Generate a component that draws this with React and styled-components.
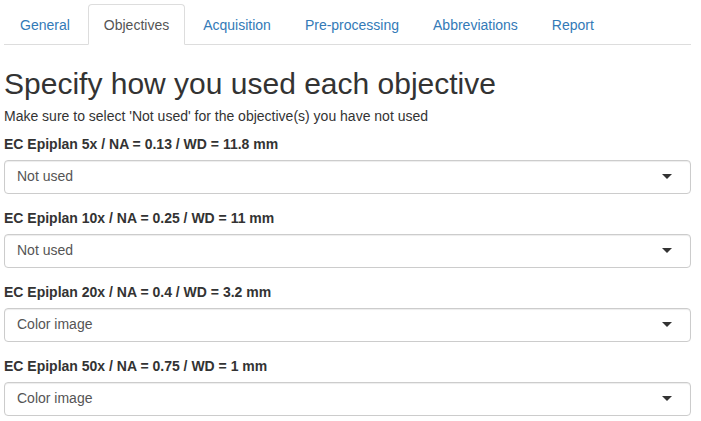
import React from "react";
import styled, { createGlobalStyle } from "styled-components";

const GlobalStyle = createGlobalStyle`
  body {
    margin: 0;
    background: #fff;
    font-family: "Liberation Sans", Arial, sans-serif;
    font-size: 14px;
    line-height: 1.42857;
    color: #333;
  }
  * { box-sizing: border-box; }
`;

const Page = styled.div`
  width: 687px;
  margin-left: 4px;
  padding-top: 4px;
`;

const Tabs = styled.ul`
  display: flex;
  list-style: none;
  margin: 0;
  padding: 0;
  border-bottom: 1px solid #ddd;
`;

const Tab = styled.li`
  margin-right: 2px;
  margin-bottom: -1px;
  padding: 11px 15px 9px;
  line-height: 19px;
  border: 1px solid ${(p) => (p.$active ? "#ddd" : "transparent")};
  border-bottom-color: ${(p) => (p.$active ? "#fff" : "transparent")};
  border-radius: 4px 4px 0 0;
  background: ${(p) => (p.$active ? "#fff" : "transparent")};
  color: ${(p) => (p.$active ? "#555" : "#337ab7")};
  cursor: pointer;
`;

const Heading = styled.h2`
  margin: 22px 0 7px;
  font-size: 30px;
  font-weight: 500;
  line-height: 1.1;
  color: #333;
`;

const Hint = styled.p`
  margin: 0 0 8px;
`;

const Group = styled.div`
  margin-bottom: 15px;
`;

const Label = styled.label`
  display: block;
  margin-bottom: 5px;
  font-weight: 700;
`;

const SelectBox = styled.div`
  display: flex;
  align-items: center;
  justify-content: space-between;
  height: 34px;
  padding: 6px 18px 6px 12px;
  border: 1px solid #ccc;
  border-radius: 4px;
  box-shadow: inset 0 1px 1px rgba(0, 0, 0, 0.075);
  color: #555;
  background: #fff;
`;

const Caret = styled.span`
  width: 0;
  height: 0;
  border-left: 5px solid transparent;
  border-right: 5px solid transparent;
  border-top: 5px solid #333;
`;

const tabs = ["General", "Objectives", "Acquisition", "Pre-processing", "Abbreviations", "Report"];

const objectives = [
  { name: "EC Epiplan 5x / NA = 0.13 / WD = 11.8 mm", value: "Not used" },
  { name: "EC Epiplan 10x / NA = 0.25 / WD = 11 mm", value: "Not used" },
  { name: "EC Epiplan 20x / NA = 0.4 / WD = 3.2 mm", value: "Color image" },
  { name: "EC Epiplan 50x / NA = 0.75 / WD = 1 mm", value: "Color image" },
];

export default function App() {
  return (
    <Page>
      <GlobalStyle />
      <Tabs>
        {tabs.map((t) => (
          <Tab key={t} $active={t === "Objectives"}>
            {t}
          </Tab>
        ))}
      </Tabs>
      <Heading>Specify how you used each objective</Heading>
      <Hint>Make sure to select 'Not used' for the objective(s) you have not used</Hint>
      {objectives.map((o) => (
        <Group key={o.name}>
          <Label>{o.name}</Label>
          <SelectBox>
            <span>{o.value}</span>
            <Caret />
          </SelectBox>
        </Group>
      ))}
    </Page>
  );
}
